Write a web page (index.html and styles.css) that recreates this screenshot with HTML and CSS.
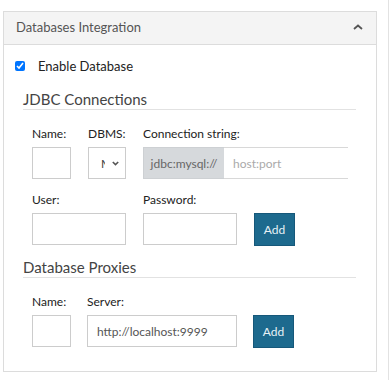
FILE: index.html
```html
<!DOCTYPE html>
<html lang="en">
<head>
    <meta charset="UTF-8">
    <meta name="viewport" content="width=device-width, initial-scale=1.0">
    <title>Databases Integration</title>
    <link rel="stylesheet" href="styles.css">
</head>
<body>
    <div class="page">
        <!-- Databases panel -->
        <div class="panel">
            <div class="panel-header">
                <span>Databases Integration</span>
                <svg class="chevron" width="10" height="6" viewBox="0 0 10 6">
                    <path d="M1 5 L5 1.5 L9 5" fill="none" stroke="#555" stroke-width="1.8"/>
                </svg>
            </div>

            <div class="panel-body">
                <label class="check-row">
                    <input type="checkbox" checked>
                    <span>Enable Database</span>
                </label>

                <!-- JDBC -->
                <div class="section">
                    <div class="section-title">JDBC Connections</div>
                    <div class="form-row">
                        <div class="field">
                            <label>Name:</label>
                            <input type="text" class="input w-name">
                        </div>
                        <div class="field">
                            <label>DBMS:</label>
                            <div class="select-wrap">
                                <select class="input w-dbms">
                                    <option>MySQL</option>
                                    <option>PostgreSQL</option>
                                </select>
                                <svg class="select-arrow" width="7" height="5" viewBox="0 0 7 5">
                                    <path d="M0.8 1 L3.5 3.6 L6.2 1" fill="none" stroke="#555" stroke-width="1.6"/>
                                </svg>
                            </div>
                        </div>
                        <div class="field">
                            <label>Connection string:</label>
                            <div class="input-group">
                                <span class="addon">jdbc:mysql://</span>
                                <input type="text" class="input group-input" placeholder="host:port">
                            </div>
                        </div>
                    </div>
                    <div class="form-row second">
                        <div class="field">
                            <label>User:</label>
                            <input type="text" class="input w-wide">
                        </div>
                        <div class="field">
                            <label>Password:</label>
                            <input type="password" class="input w-wide">
                        </div>
                        <button class="add-btn">Add</button>
                    </div>
                </div>

                <!-- Proxies -->
                <div class="section proxies">
                    <div class="section-title">Database Proxies</div>
                    <div class="form-row tight">
                        <div class="field">
                            <label>Name:</label>
                            <input type="text" class="input w-name">
                        </div>
                        <div class="field">
                            <label>Server:</label>
                            <input type="text" class="input w-server" value="http://localhost:9999">
                        </div>
                        <button class="add-btn">Add</button>
                    </div>
                </div>
            </div>
        </div>
    </div>
</body>
</html>
```

FILE: styles.css
```css
:root {
    --border: #dcdcdc;
    --input-border: #cccccc;
    --header-bg: #f4f4f4;
    --text: #222222;
    --text-muted: #555555;
    --btn-bg: #1d6a8e;
    --btn-border: #16587a;
}

body {
    margin: 0;
    font-family: Lato, "Open Sans", sans-serif;
    color: var(--text);
    background: #ffffff;
}

.page {
    width: 389px;
    height: 380px;
    padding: 11px 0 0 3px;
    box-sizing: border-box;
    border-right: 1px solid #e2e2e2;
}

/* Panel */
.panel {
    width: 374px;
    box-sizing: border-box;
    border: 1px solid var(--border);
}

.panel-header {
    height: 33px;
    display: flex;
    align-items: center;
    justify-content: space-between;
    padding: 0 13px 2px 12px;
    box-sizing: border-box;
    background: var(--header-bg);
    border-bottom: 1px solid var(--border);
    font-size: 13px;
    color: var(--text-muted);
}

.panel-body {
    padding: 13px 20px 24px 0;
}

.check-row {
    display: flex;
    align-items: center;
    height: 16px;
    padding-left: 11px;
    font-size: 13px;
}

.check-row input {
    width: 10px;
    height: 10px;
    margin: 0 13px 0 0;
}

/* Sections */
.section {
    margin: 16px 0 0 19px;
}

.section.proxies {
    margin-top: 13px;
}

.section-title {
    font-size: 15px;
    line-height: 18px;
    color: #444;
    padding-bottom: 1px;
    border-bottom: 1px solid #e2e2e2;
}

.form-row {
    display: flex;
    align-items: flex-end;
    gap: 17px;
    padding-left: 9px;
    margin-top: 17px;
}

.form-row.second {
    margin-top: 14px;
}

.form-row.tight {
    gap: 16px;
}

.field {
    display: flex;
    flex-direction: column;
}

.field label {
    width: 0;
    white-space: nowrap;
    font-size: 12px;
    line-height: 14px;
    margin-bottom: 6px;
}

.input {
    height: 32px;
    box-sizing: border-box;
    border: 1px solid var(--input-border);
    font-family: inherit;
    font-size: 12px;
    color: var(--text-muted);
    padding: 0 9px;
    margin: 0;
    outline: none;
    background: #fff;
}

.w-name { width: 39px; }
.w-dbms { width: 38px; }
.w-wide { width: 94px; }
.w-server { width: 150px; }

.select-wrap {
    position: relative;
}

.select-wrap select {
    appearance: none;
    padding: 0 20px 0 12px;
    color: #444;
}

.select-arrow {
    position: absolute;
    right: 7px;
    top: 14px;
    pointer-events: none;
}

.input-group {
    display: flex;
    height: 32px;
}

.addon {
    width: 81px;
    box-sizing: border-box;
    display: flex;
    align-items: center;
    justify-content: center;
    background: #d6d9dc;
    border: 1px solid #cdd0d3;
    border-right: none;
    font-size: 12px;
    color: #666;
}

.group-input {
    width: 124px;
    border-left: none;
    border-right: none;
    border-color: #d8d8d8;
}

.group-input::placeholder {
    color: #aaa;
}

.add-btn {
    width: 41px;
    height: 33px;
    margin-bottom: -1px;
    background: var(--btn-bg);
    border: 1px solid var(--btn-border);
    color: #e8f1f6;
    font-family: inherit;
    font-size: 12px;
    cursor: pointer;
}
```
